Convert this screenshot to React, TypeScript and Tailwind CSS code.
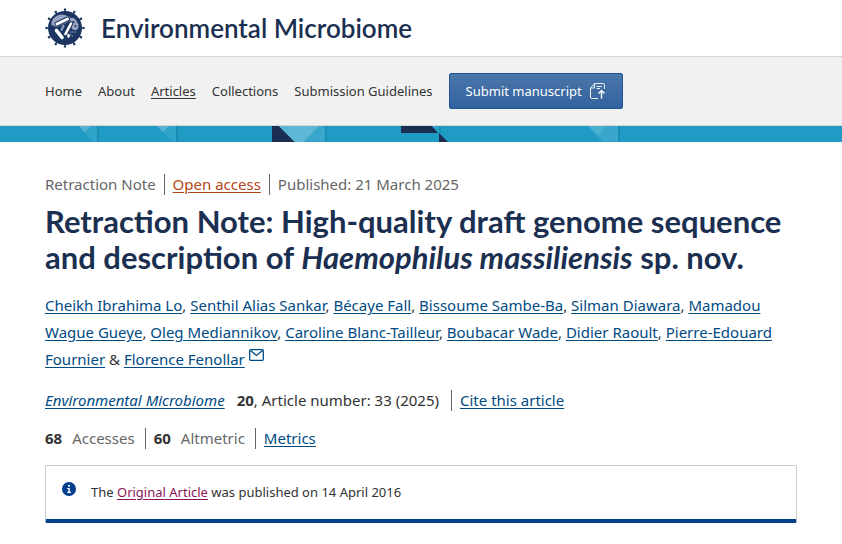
import React from 'react';

const navItems = ['Home', 'About', 'Articles', 'Collections', 'Submission Guidelines'];

const authors = [
  'Cheikh Ibrahima Lo',
  'Senthil Alias Sankar',
  'Bécaye Fall',
  'Bissoume Sambe-Ba',
  'Silman Diawara',
  'Mamadou Wague Gueye',
  'Oleg Mediannikov',
  'Caroline Blanc-Tailleur',
  'Boubacar Wade',
  'Didier Raoult',
  'Pierre-Edouard Fournier',
];

const spikes = [0, 30, 60, 90, 120, 150, 180, 210, 240, 270, 300, 330];

function JournalLogo() {
  return (
    <svg viewBox="0 0 40 40" className="h-10 w-10 shrink-0" aria-hidden="true">
      {spikes.map((angle) => (
        <g key={angle} transform={`rotate(${angle} 20 20)`} fill="#1b3560">
          <rect x="19.2" y="1" width="1.6" height="4" />
          <rect x="18.8" y="0.4" width="2.4" height="1.6" rx="0.6" />
        </g>
      ))}
      <circle cx="20" cy="20" r="17" fill="#1b3560" />
      <path d="M6.5 17 Q6 12 10 9 Q15 5.5 20 7 L25 9 L23 14 L15 18 L11 19 Z" fill="#98a4c2" />
      <path d="M25 10 Q30 9 32 14 Q35 18 32 22 L28 22 L24 16 Z" fill="#98a4c2" />
      <path d="M25 24 L31 24 M25 27 L28 28" stroke="#7f8eb2" strokeWidth="1.6" strokeDasharray="1.4 1" />
      <g strokeLinecap="round">
        <path d="M12 16 L22.5 11" stroke="#1b3560" strokeWidth="5" />
        <path d="M26 15.5 L20.5 26" stroke="#1b3560" strokeWidth="4.6" />
        <path d="M12 16 L22.5 11" stroke="#ffffff" strokeWidth="3" />
        <path d="M26 15.5 L20.5 26" stroke="#ffffff" strokeWidth="2.6" />
        <path d="M11.5 22.5 L17 29.5" stroke="#ffffff" strokeWidth="3.6" />
        <path d="M18.5 18 L16.5 22" stroke="#98a4c2" strokeWidth="2" />
        <path d="M23.5 27 L23.5 28.5" stroke="#ffffff" strokeWidth="2.4" />
      </g>
      <circle cx="28.5" cy="14" r="1" fill="#1b3560" />
      <circle cx="30.5" cy="18" r="1" fill="#1b3560" />
    </svg>
  );
}

function SubmitIcon() {
  return (
    <svg viewBox="0 0 16 16" className="h-4 w-4" fill="none" stroke="#ffffff" strokeWidth="0.9" aria-hidden="true">
      <path d="M8 15.5 H2 Q0.5 15.5 0.5 14 V5 L4.5 0.5 H13 Q14.5 0.5 14.5 2 V6" />
      <path d="M4.5 1 V5 H1" />
      <path d="M6.5 3.5 H12 M6.5 5.5 H10" />
      <path d="M11.5 15.5 V8 M8.5 10.5 L11.5 7.5 L14.5 10.5" strokeWidth="1.4" />
    </svg>
  );
}

function MailIcon() {
  return (
    <svg
      viewBox="0 0 16 16"
      className="ml-1 inline h-4 w-4 align-top"
      fill="none"
      stroke="#004b83"
      strokeWidth="1.3"
      aria-hidden="true"
    >
      <rect x="0.7" y="3.7" width="13.6" height="10.6" rx="1" />
      <path d="M1.5 4.5 L7.5 9.5 L13.5 4.5" />
    </svg>
  );
}

function InfoIcon() {
  return (
    <svg viewBox="0 0 14 14" className="h-3.5 w-3.5 shrink-0" aria-hidden="true">
      <circle cx="7" cy="7" r="7" fill="#003f8d" />
      <circle cx="7" cy="3.8" r="1.1" fill="#ffffff" />
      <path d="M5.2 6 H7.8 V9.8 H9 V10.9 H5.2 V9.8 H6.3 V7.1 H5.2 Z" fill="#ffffff" />
    </svg>
  );
}

function Banner() {
  return (
    <div className="h-4 overflow-hidden bg-[#1f9bc5]">
      <svg width="842" height="16" aria-hidden="true">
        <g>
          <path d="M78 0 H97 V16 H94 Z" fill="#30a3ca" />
          <path d="M79 0 H91 L85 6 Z" fill="#57b4d3" />
          <path d="M97 0 H99 V16 H97 Z" fill="#1b8cb3" />
          <path d="M157 0 H176 V16 H173 Z" fill="#30a3ca" />
          <path d="M157 0 H169 L163 6 Z" fill="#57b4d3" />
          <path d="M176 0 H178 V16 H176 Z" fill="#1b8cb3" />
        </g>
        <g>
          <path d="M272 0 H279 L295 16 H272 Z" fill="#1b2f52" />
          <path d="M279 0 H325 V16 H295 Z" fill="#39a6cb" />
          <path d="M279 0 H319 L303 16 H295 Z" fill="#5eb7d4" />
          <path d="M325 0 H327 V16 H325 Z" fill="#1b8cb3" />
        </g>
        <g>
          <path d="M401 0 H432 L438 7 H401 Z" fill="#1b2f52" />
          <path d="M432 0 H439 V7 Z" fill="#30a3ca" />
          <path d="M439 7 L448 16 H439 Z" fill="#1b2f52" />
          <path d="M439 0 H441 V7 H439 Z" fill="#1b8cb3" />
        </g>
        <g>
          <path d="M588 0 H618 V16 H603 Z" fill="#39a6cb" />
          <path d="M588 0 H607 L598 9 Z" fill="#4eb0d0" />
          <path d="M618 0 H620 V16 H618 Z" fill="#1b8cb3" />
        </g>
      </svg>
    </div>
  );
}

export default function App() {
  return (
    <div className="min-h-screen bg-white font-['Noto_Sans',sans-serif] text-[15px] leading-[21px] text-[#333333]">
      <header>
        <div className="flex h-14 items-center gap-4 px-[45px]">
          <JournalLogo />
          <span className="font-['Lato',sans-serif] text-[26px] font-semibold text-[#1b3051]">
            Environmental Microbiome
          </span>
        </div>

        <nav className="flex items-center gap-4 border-y border-[#d5d5d5] bg-[#f1f1f1] px-[45px] py-4 text-[13px]">
          {navItems.map((item) => (
            <a
              key={item}
              href="#"
              className={`whitespace-nowrap ${item === 'Articles' ? 'underline underline-offset-2' : ''}`}
            >
              {item}
            </a>
          ))}
          <a
            href="#"
            className="flex h-9 items-center gap-2 whitespace-nowrap rounded-xs border border-[#1f5597] bg-linear-to-b from-[#4a76a9] to-[#33629f] px-4 text-white"
          >
            Submit manuscript
            <SubmitIcon />
          </a>
        </nav>
        <Banner />
      </header>

      <main className="px-[45px] pt-8">
        <ul className="flex items-center text-[#666666]">
          <li className="border-r border-[#666666] pr-2">Retraction Note</li>
          <li className="border-r border-[#666666] px-2">
            <a href="#" className="text-[#b74616] underline underline-offset-2">Open access</a>
          </li>
          <li className="pl-2">
            Published: <time dateTime="2025-03-21">21 March 2025</time>
          </li>
        </ul>

        <h1 className="mt-2 font-['Lato',sans-serif] text-[31px] leading-9 font-bold text-[#1b3051]">
          Retraction Note: High-quality draft genome sequence and description of <i>Haemophilus massiliensis</i> sp. nov.
        </h1>

        <p className="mt-[17px] leading-[27px]">
          {authors.map((name, i) => (
            <React.Fragment key={name}>
              <a href="#" className="text-[#004b83] underline underline-offset-2">{name}</a>
              {i < authors.length - 1 ? ', ' : ' & '}
            </React.Fragment>
          ))}
          <a href="#" className="text-[#004b83]">
            <span className="underline underline-offset-2">Florence Fenollar</span>
            <MailIcon />
          </a>
        </p>

        <p className="mt-[17px] flex items-center">
          <a href="#" className="text-[#004b83] italic underline underline-offset-2">Environmental Microbiome</a>
          <span className="ml-3"><b>20</b>, Article number: 33 (2025)</span>
          <span className="ml-3 border-l border-[#666666] pl-2">
            <a href="#" className="text-[#004b83] underline underline-offset-2">Cite this article</a>
          </span>
        </p>

        <ul className="mt-[17px] flex items-center text-[#666666]">
          <li className="border-r border-[#666666] pr-2.5"><b className="mr-2.5 text-[#333333]">68</b>Accesses</li>
          <li className="border-r border-[#666666] pr-2.5 pl-2"><b className="mr-2.5 text-[#333333]">60</b>Altmetric</li>
          <li className="pl-2"><a href="#" className="text-[#004b83] underline underline-offset-2">Metrics</a></li>
        </ul>

        <div className="mt-4 flex gap-[15px] rounded-xs border border-b-4 border-[#cccccc] border-b-[#003f8d] p-4 text-[13px] leading-[21px]">
          <InfoIcon />
          <p>
            The <a href="#" className="text-[#8a1556] underline underline-offset-2">Original Article</a> was published on 14 April 2016
          </p>
        </div>
      </main>
    </div>
  );
}
